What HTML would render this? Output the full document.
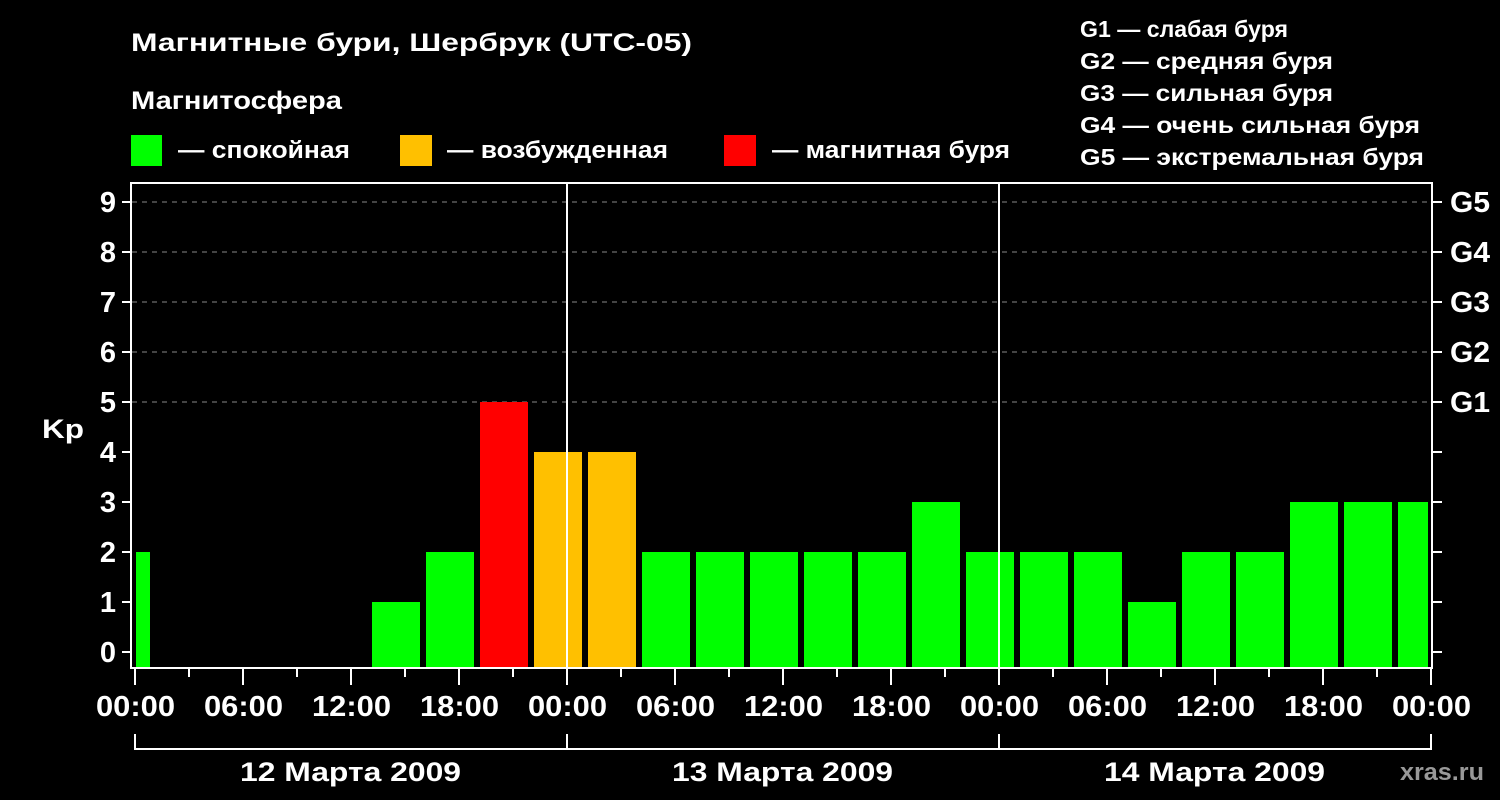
<!DOCTYPE html>
<html><head><meta charset="utf-8"><style>
html,body{margin:0;padding:0;background:#000;width:1500px;height:800px;overflow:hidden}
text{font-family:"Liberation Sans",Arial,sans-serif;font-weight:bold;fill:#fff}
</style></head><body>
<svg width="1500" height="800" viewBox="0 0 1500 800" xmlns="http://www.w3.org/2000/svg">
<rect width="1500" height="800" fill="#000"/>
<text x="131" y="51" font-size="25" textLength="561" lengthAdjust="spacingAndGlyphs">Магнитные бури, Шербрук (UTC-05)</text>
<text x="131" y="109" font-size="25" textLength="211" lengthAdjust="spacingAndGlyphs">Магнитосфера</text>
<rect x="131" y="135" width="31" height="31" fill="#00ff00"/>
<text x="178" y="158" font-size="24" textLength="172" lengthAdjust="spacingAndGlyphs">— спокойная</text>
<rect x="400" y="135" width="32" height="31" fill="#ffc000"/>
<text x="447" y="158" font-size="24" textLength="221" lengthAdjust="spacingAndGlyphs">— возбужденная</text>
<rect x="724" y="135" width="32" height="31" fill="#ff0000"/>
<text x="772" y="158" font-size="24" textLength="238" lengthAdjust="spacingAndGlyphs">— магнитная буря</text>
<g font-size="23">
<text x="1080" y="37" textLength="208" lengthAdjust="spacingAndGlyphs">G1 — слабая буря</text>
<text x="1080" y="69" textLength="253" lengthAdjust="spacingAndGlyphs">G2 — средняя буря</text>
<text x="1080" y="101" textLength="253" lengthAdjust="spacingAndGlyphs">G3 — сильная буря</text>
<text x="1080" y="133" textLength="340" lengthAdjust="spacingAndGlyphs">G4 — очень сильная буря</text>
<text x="1080" y="165" textLength="344" lengthAdjust="spacingAndGlyphs">G5 — экстремальная буря</text>
</g>
<g stroke="#888" stroke-width="1" stroke-dasharray="5,5">
<line x1="132" y1="202" x2="1432" y2="202"/>
<line x1="132" y1="252" x2="1432" y2="252"/>
<line x1="132" y1="302" x2="1432" y2="302"/>
<line x1="132" y1="352" x2="1432" y2="352"/>
<line x1="132" y1="402" x2="1432" y2="402"/>
</g>
<g fill="#00ff00">
<rect x="136" y="552" width="14" height="116"/>
<rect x="372" y="602" width="48" height="66"/>
<rect x="426" y="552" width="48" height="116"/>
<rect x="642" y="552" width="48" height="116"/>
<rect x="696" y="552" width="48" height="116"/>
<rect x="750" y="552" width="48" height="116"/>
<rect x="804" y="552" width="48" height="116"/>
<rect x="858" y="552" width="48" height="116"/>
<rect x="912" y="502" width="48" height="166"/>
<rect x="966" y="552" width="48" height="116"/>
<rect x="1020" y="552" width="48" height="116"/>
<rect x="1074" y="552" width="48" height="116"/>
<rect x="1128" y="602" width="48" height="66"/>
<rect x="1182" y="552" width="48" height="116"/>
<rect x="1236" y="552" width="48" height="116"/>
<rect x="1290" y="502" width="48" height="166"/>
<rect x="1344" y="502" width="48" height="166"/>
<rect x="1398" y="502" width="30" height="166"/>
</g>
<rect x="480" y="402" width="48" height="266" fill="#ff0000"/>
<rect x="534" y="452" width="48" height="216" fill="#ffc000"/>
<rect x="588" y="452" width="48" height="216" fill="#ffc000"/>
<g stroke="#fff" stroke-width="2" fill="none">
<rect x="131" y="183" width="1301" height="485"/>
<line x1="567" y1="183" x2="567" y2="668"/>
<line x1="999" y1="183" x2="999" y2="668"/>
<path d="M122 202H131M122 252H131M122 302H131M122 352H131M122 402H131M122 452H131M122 502H131M122 552H131M122 602H131M122 652H131"/>
<path d="M1432 202H1442M1432 252H1442M1432 302H1442M1432 352H1442M1432 402H1442M1432 452H1442M1432 502H1442M1432 552H1442M1432 602H1442M1432 652H1442"/>
<path d="M135 668V685M189 668V677M243 668V685M297 668V677M351 668V685M405 668V677M459 668V685M513 668V677M567 668V685M621 668V677M675 668V685M729 668V677M783 668V685M837 668V677M891 668V685M945 668V677M999 668V685M1053 668V677M1107 668V685M1161 668V677M1215 668V685M1269 668V677M1323 668V685M1377 668V677M1431 668V685"/>
<path d="M135 734V749H1431V734M567 734V749M999 734V749"/>
</g>
<g font-size="29" text-anchor="end">
<text x="116" y="212">9</text><text x="116" y="262">8</text><text x="116" y="312">7</text><text x="116" y="362">6</text><text x="116" y="412">5</text><text x="116" y="462">4</text><text x="116" y="512">3</text><text x="116" y="562">2</text><text x="116" y="612">1</text><text x="116" y="662">0</text>
</g>
<text x="42" y="438" font-size="27" textLength="42" lengthAdjust="spacingAndGlyphs">Kp</text>
<g font-size="29">
<text x="1450" y="212" textLength="40" lengthAdjust="spacingAndGlyphs">G5</text><text x="1450" y="262" textLength="40" lengthAdjust="spacingAndGlyphs">G4</text><text x="1450" y="312" textLength="40" lengthAdjust="spacingAndGlyphs">G3</text><text x="1450" y="362" textLength="40" lengthAdjust="spacingAndGlyphs">G2</text><text x="1450" y="412" textLength="40" lengthAdjust="spacingAndGlyphs">G1</text>
</g>
<g font-size="29">
<text x="96" y="716" textLength="79" lengthAdjust="spacingAndGlyphs">00:00</text>
<text x="204" y="716" textLength="79" lengthAdjust="spacingAndGlyphs">06:00</text>
<text x="312" y="716" textLength="79" lengthAdjust="spacingAndGlyphs">12:00</text>
<text x="420" y="716" textLength="79" lengthAdjust="spacingAndGlyphs">18:00</text>
<text x="528" y="716" textLength="79" lengthAdjust="spacingAndGlyphs">00:00</text>
<text x="636" y="716" textLength="79" lengthAdjust="spacingAndGlyphs">06:00</text>
<text x="744" y="716" textLength="79" lengthAdjust="spacingAndGlyphs">12:00</text>
<text x="852" y="716" textLength="79" lengthAdjust="spacingAndGlyphs">18:00</text>
<text x="960" y="716" textLength="79" lengthAdjust="spacingAndGlyphs">00:00</text>
<text x="1068" y="716" textLength="79" lengthAdjust="spacingAndGlyphs">06:00</text>
<text x="1176" y="716" textLength="79" lengthAdjust="spacingAndGlyphs">12:00</text>
<text x="1284" y="716" textLength="79" lengthAdjust="spacingAndGlyphs">18:00</text>
<text x="1392" y="716" textLength="79" lengthAdjust="spacingAndGlyphs">00:00</text>
</g>
<g font-size="27">
<text x="240" y="781" textLength="221" lengthAdjust="spacingAndGlyphs">12 Марта 2009</text>
<text x="672" y="781" textLength="221" lengthAdjust="spacingAndGlyphs">13 Марта 2009</text>
<text x="1104" y="781" textLength="221" lengthAdjust="spacingAndGlyphs">14 Марта 2009</text>
</g>
<text x="1400" y="780" font-size="24" style="fill:#999" textLength="84" lengthAdjust="spacingAndGlyphs">xras.ru</text>
</svg>
</body></html>
